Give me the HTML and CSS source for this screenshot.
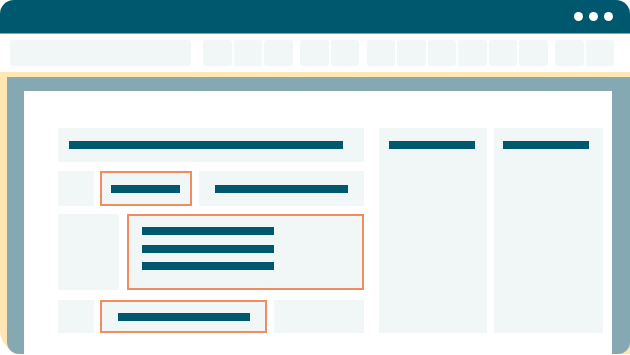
FILE: index.html
```html
<!DOCTYPE html>
<html lang="en">
<head>
    <meta charset="UTF-8">
    <meta name="viewport" content="width=device-width, initial-scale=1.0">
    <title>Page Layout Sketch</title>
    <link rel="stylesheet" href="styles.css">
</head>
<body>
    <div class="window">
        <div class="titlebar">
            <span class="dot"></span>
            <span class="dot"></span>
            <span class="dot"></span>
        </div>

        <div class="toolbar">
            <div class="search"></div>
            <div class="group">
                <div class="btn"></div>
                <div class="btn"></div>
                <div class="btn"></div>
            </div>
            <div class="group">
                <div class="btn"></div>
                <div class="btn"></div>
            </div>
            <div class="group">
                <div class="btn"></div>
                <div class="btn"></div>
                <div class="btn"></div>
                <div class="btn"></div>
                <div class="btn"></div>
                <div class="btn"></div>
            </div>
            <div class="group">
                <div class="btn"></div>
                <div class="btn"></div>
            </div>
        </div>

        <div class="frame">
            <div class="bezel">
                <div class="screen">
                    <div class="main">
                        <!-- heading row -->
                        <div class="row row-head">
                            <div class="cell cell-full">
                                <span class="line line-head"></span>
                            </div>
                        </div>

                        <div class="row row-two">
                            <div class="cell cell-small"></div>
                            <div class="cell picked picked-short">
                                <span class="line line-short"></span>
                            </div>
                            <div class="cell cell-wide">
                                <span class="line line-mid"></span>
                            </div>
                        </div>

                        <div class="row row-three">
                            <div class="cell cell-tall"></div>
                            <div class="cell picked picked-block">
                                <span class="line line-text"></span>
                                <span class="line line-text"></span>
                                <span class="line line-text"></span>
                            </div>
                        </div>

                        <div class="row row-four">
                            <div class="cell cell-small"></div>
                            <div class="cell picked picked-long">
                                <span class="line line-text"></span>
                            </div>
                            <div class="cell cell-end"></div>
                        </div>
                    </div>

                    <div class="side side-one">
                        <span class="line line-side"></span>
                    </div>
                    <div class="side side-two">
                        <span class="line line-side"></span>
                    </div>
                </div>
            </div>
        </div>
    </div>
</body>
</html>
```

FILE: styles.css
```css
* {
    box-sizing: border-box;
}
body {
    margin: 0;
    background: #ffffff;
    font-family: "Liberation Sans", Arial, sans-serif;
}
.window {
    width: 630px;
    height: 355px;
    overflow: hidden;
}

/* title bar */
.titlebar {
    height: 34px;
    background-color: #00586e;
    border-bottom: 1px solid #7fa6b1;
    border-radius: 14px 14px 0 0;
    display: flex;
    justify-content: flex-end;
    align-items: center;
    gap: 6px;
    padding-right: 17px;
}
.dot {
    width: 9px;
    height: 9px;
    border-radius: 50%;
    background: #ffffff;
}

/* toolbar */
.toolbar {
    height: 38px;
    display: flex;
    align-items: center;
    padding-left: 10px;
}
.search {
    width: 181px;
    height: 26px;
    border-radius: 3px;
    background: #f1f6f7;
    margin-right: 12px;
}
.group {
    display: flex;
    gap: 2px;
    margin-right: 7.5px;
}
.btn {
    width: 28.5px;
    height: 26px;
    border-radius: 3px;
    background: #f1f6f7;
}

/* monitor frame */
.frame {
    height: 282px;
    background: #ffe6b2;
    padding: 5px 0 0 7px;
    border-bottom-left-radius: 24px;
}
.bezel {
    height: 277px;
    background: #84a9b3;
    padding: 14px 18px 0 17px;
    border-radius: 0 0 12px 12px;
    overflow: hidden;
}
.screen {
    height: 100%;
    background: #ffffff;
    padding: 37px 0 0 34px;
    display: flex;
    align-items: flex-start;
}

/* blocks */
.cell {
    background: #f1f6f7;
    display: flex;
    align-items: center;
}
.line {
    display: block;
    height: 8px;
    background: #00586e;
}
.picked {
    border: 2px solid #f08c5e;
}

.main {
    width: 306px;
    display: flex;
    flex-direction: column;
}
.row {
    display: flex;
}
.row-head {
    height: 34px;
}
.row-two {
    height: 35px;
    margin-top: 9px;
}
.row-three {
    height: 76px;
    margin-top: 8px;
}
.row-four {
    height: 33px;
    margin-top: 10px;
}

.cell-full {
    width: 306px;
    padding-left: 11px;
}
.line-head {
    width: 274px;
}
.cell-small {
    width: 36px;
    margin-right: 6px;
}
.picked-short {
    width: 92px;
    padding-left: 9px;
}
.line-short {
    width: 69px;
}
.cell-wide {
    width: 165px;
    margin-left: 7px;
    padding-left: 16px;
}
.line-mid {
    width: 133px;
}
.cell-tall {
    width: 61px;
    margin-right: 8px;
}
.picked-block {
    width: 237px;
    flex-direction: column;
    align-items: flex-start;
    gap: 9.5px;
    padding: 11px 0 0 13px;
}
.line-text {
    width: 132px;
}
.picked-long {
    width: 167px;
    padding-left: 16px;
}
.cell-end {
    width: 90px;
    margin-left: 7px;
}

.side {
    height: 205px;
    background: #f1f6f7;
    padding: 13px 0 0 10px;
}
.side-one {
    width: 108px;
    margin-left: 15px;
}
.side-two {
    width: 109px;
    margin-left: 7px;
    padding-left: 9px;
}
.line-side {
    width: 86px;
}
```
